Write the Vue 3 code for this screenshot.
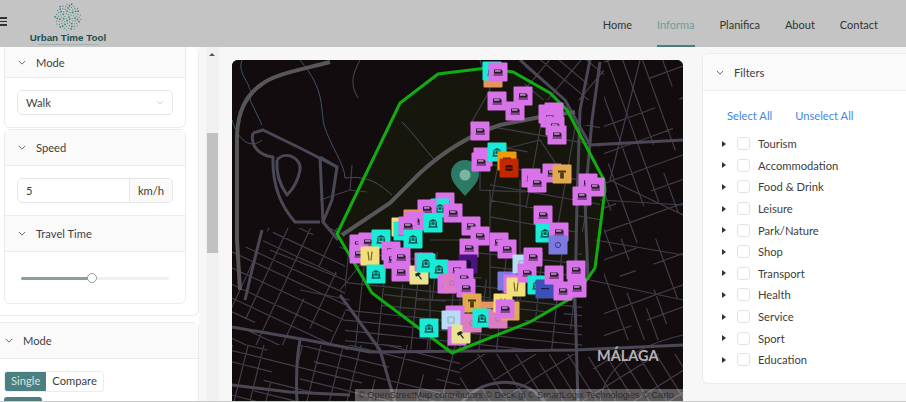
<script setup>
const navItems = ['Home', 'Informa', 'Planifica', 'About', 'Contact']
const filters = ['Tourism', 'Accommodation', 'Food & Drink', 'Leisure', 'Park/Nature', 'Shop', 'Transport', 'Health', 'Service', 'Sport', 'Education']

// logo dots, spread on a disc from a small fixed sequence
const logoDots = []
for (let i = 0; i < 80; i++) {
  const r = 13.5 * Math.sqrt((i + 0.5) / 80)
  const a = i * 2.39996
  logoDots.push({ x: 15 + r * Math.cos(a), y: 15 + r * Math.sin(a), r: i % 3 === 0 ? 0.85 : 0.55 })
}

// small streets of the base map: broken grids, one per city block area
let seed = 7
function rnd() {
  seed = (seed * 16807) % 2147483647
  return seed / 2147483647
}
function streetGrid(x0, y0, x1, y1, angle, step) {
  const cx = (x0 + x1) / 2
  const cy = (y0 + y1) / 2
  const reach = Math.hypot(x1 - x0, y1 - y0) / 2
  let d = ''
  for (const turn of [0, 90]) {
    const rad = ((angle + turn) * Math.PI) / 180
    const ux = Math.cos(rad)
    const uy = Math.sin(rad)
    const gap = turn ? step * 1.7 : step
    for (let t = -reach; t < reach; t += gap * (0.8 + rnd() * 0.5)) {
      let s = -reach
      while (s < reach) {
        const len = 14 + rnd() * 38
        if (rnd() > 0.25) {
          d += `M${(cx + ux * s - uy * t).toFixed(1)} ${(cy + uy * s + ux * t).toFixed(1)}L${(cx + ux * (s + len) - uy * t).toFixed(1)} ${(cy + uy * (s + len) + ux * t).toFixed(1)}`
        }
        s += len
      }
    }
  }
  return { x: x0, y: y0, w: x1 - x0, h: y1 - y0, d }
}
const streetAreas = [
  streetGrid(604, 60, 683, 340, 70, 15),
  streetGrid(232, 345, 460, 402, 14, 11),
  streetGrid(460, 354, 683, 402, 58, 13),
  streetGrid(232, 228, 345, 345, 25, 12),
  streetGrid(345, 252, 582, 350, 6, 10),
  streetGrid(490, 125, 600, 232, 10, 17),
  streetGrid(525, 60, 604, 100, 40, 14),
]

const highways = [
  'M330 62 C300 70 275 74 262 84 C245 96 238 112 237 135 L237 240 L240 290',
  'M342 235 L390 203 L420 173 C445 150 470 135 500 125 L540 117 L575 112',
]
const majorRoads = [
  'M232 327 L307 340 L370 352 L575 350 L683 345',
  'M578 402 L575 300 L577 200 L580 110 L590 60',
  'M253 133 L263 130 L300 148 L337 167 L332 200 L323 222 L338 240',
  'M253 133 C250 145 258 155 273 157 C272 185 280 205 295 222 L320 222',
  'M277 160 C285 150 302 158 300 170 C298 182 292 190 287 195 C280 185 276 172 277 160',
  'M320 157 L337 167 M320 157 L323 222',
  'M232 385 L290 392 L350 395',
  'M340 295 L380 350 L395 402',
  'M300 340 C296 360 296 380 297 402',
  'M462 402 C480 380 520 372 545 402',
  'M520 60 L565 100 L590 145 L683 140',
  'M262 230 L252 270 L245 300',
  'M600 62 L592 120 L585 200 L588 280',
]
const minorRoads = [
  'M360 60 C352 75 350 85 358 98', 'M640 60 L610 180 L683 215', 'M600 200 L683 205', 'M595 240 L683 255',
  'M590 280 L683 300', 'M520 180 L520 300', 'M480 160 L480 190 L525 192', 'M490 190 L490 300', 'M430 240 L500 240',
  'M430 285 L430 350', 'M460 290 L460 350', 'M415 300 L500 300', 'M300 290 L350 300', 'M270 250 L345 280',
  'M480 60 L490 90 L470 125', 'M500 150 L540 140 L560 170', 'M320 200 L350 190 L367 192', 'M350 190 L352 165',
  'M380 240 L340 290', 'M600 402 C605 365 640 345 683 335',
]
const streams = [
  'M242 60 C236 75 255 85 250 100 L262 125',
  'M300 60 C325 90 320 105 324 125 C330 145 345 165 345 178 C370 175 380 185 392 195',
  'M402 122 C415 135 425 150 435 160',
  'M232 120 C238 140 250 150 262 140',
]

const rawMarkers = [
  ['o', 493, 78], ['t', 492, 71], ['p', 498, 72], ['p', 497, 101], ['p', 523, 96], ['p', 515, 111], ['p', 480, 131],
  ['p', 554, 112], ['p', 548, 114], ['p', 550, 118], ['p', 555, 126], ['p', 557, 135],
  ['p', 483, 157], ['p', 481, 162], ['t', 497, 152], ['a', 507, 161], ['r', 509, 168],
  ['p', 531, 178], ['p', 537, 183], ['p', 552, 173], ['g', 562, 174], ['p', 588, 183], ['p', 595, 187], ['p', 582, 196],
  ['p', 543, 215], ['p', 445, 202], ['t', 440, 208], ['p', 427, 209], ['o', 413, 219], ['p', 415, 221], ['p', 453, 213],
  ['t', 433, 223], ['y', 401, 227], ['t', 403, 231], ['p', 408, 226], ['t', 413, 239], ['p', 471, 226], ['p', 480, 236], ['p', 469, 248], ['d', 468, 264],
  ['p', 499, 242], ['p', 507, 249], ['p', 359, 244], ['p', 368, 242], ['t', 381, 239], ['p', 359, 254], ['y', 370, 256], ['t', 376, 274],
  ['p', 391, 251], ['p', 393, 259], ['p', 401, 257], ['p', 401, 272], ['k', 419, 275], ['p', 424, 262], ['t', 426, 263], ['t', 439, 269], ['p', 457, 270],
  ['p', 447, 284], ['e', 452, 283], ['p', 464, 278], ['p', 466, 288], ['g', 472, 303],
  ['p', 455, 315], ['l', 451, 320], ['p', 457, 336], ['k', 461, 334], ['e', 472, 323], ['t', 429, 328], ['o', 490, 311], ['t', 482, 318], ['e', 498, 319],
  ['y', 503, 303], ['g', 510, 311], ['p', 505, 309], ['v', 507, 281], ['p', 513, 284], ['y', 516, 287], ['l', 522, 264], ['p', 533, 257], ['p', 527, 273],
  ['t', 537, 285], ['b', 545, 289], ['p', 554, 275], ['p', 563, 291], ['p', 576, 270], ['p', 577, 288],
  ['t', 545, 233], ['p', 559, 232], ['v', 558, 245],
]
const markerColors = {
  p: '#d973ea', t: '#1aebd6', y: '#f4de7c', k: '#e9e391', o: '#e8935f', g: '#e2a94f', a: '#f39a06',
  r: '#c42600', d: '#4c1280', v: '#7c7ade', b: '#3c50b8', l: '#b9dcf6', e: '#dc7cc4',
}
const markers = rawMarkers.map(([kind, x, y], id) => ({ id, kind, x, y, color: markerColors[kind] }))
const isochrone = '487,68 513,72 550,93 567,110 604,180 605,190 595,268 588,278 573,297 530,322 452,353 372,293 337,234 400,103 438,74'
</script>

<template>
  <div class="page">
    <header class="topbar">
      <div class="burger"><i></i><i></i><i></i></div>
      <div class="logo">
        <svg class="logo-mark" width="30" height="30" viewBox="0 0 30 30">
          <circle v-for="(d, i) in logoDots" :key="i" :cx="d.x" :cy="d.y" :r="d.r" fill="#2f7f78" />
        </svg>
        <div class="logo-name">Urban Time Tool</div>
        <div class="logo-tag"></div>
      </div>
      <nav class="nav">
        <a v-for="item in navItems" :key="item" :class="{ active: item === 'Informa' }">{{ item }}</a>
      </nav>
    </header>

    <div class="content">
      <aside class="sidebar">
        <div class="outer-card first">
          <div class="inner-card scrolled">
            <div class="card-head"><svg class="chev" viewBox="0 0 10 6"><path d="M1 1l4 4 4-4" /></svg>Mode</div>
            <div class="card-body">
              <div class="select">Walk<svg class="chev light" viewBox="0 0 10 6"><path d="M1 1l4 4 4-4" /></svg></div>
            </div>
          </div>
          <div class="inner-card">
            <div class="card-head"><svg class="chev" viewBox="0 0 10 6"><path d="M1 1l4 4 4-4" /></svg>Speed</div>
            <div class="card-body">
              <div class="input-group"><span class="input-value">5</span><span class="input-unit">km/h</span></div>
            </div>
            <div class="card-head bordered"><svg class="chev" viewBox="0 0 10 6"><path d="M1 1l4 4 4-4" /></svg>Travel Time</div>
            <div class="slider-body">
              <div class="slider"><div class="slider-fill"></div><div class="slider-thumb"></div></div>
            </div>
          </div>
        </div>
        <div class="outer-card second">
          <div class="card-head"><svg class="chev" viewBox="0 0 10 6"><path d="M1 1l4 4 4-4" /></svg>Mode</div>
          <div class="mode-body">
            <div class="toggle"><span class="on">Single</span><span>Compare</span></div>
            <div class="next-btn"></div>
          </div>
        </div>
      </aside>

      <div class="scrollbar">
        <span class="scroll-up"></span>
        <div class="scroll-thumb"></div>
      </div>

      <main class="map">
        <svg class="map-svg" width="451" height="342" viewBox="232 60 451 342">
          <defs>
            <clipPath v-for="(a, i) in streetAreas" :id="'area' + i" :key="i">
              <rect :x="a.x" :y="a.y" :width="a.w" :height="a.h" />
            </clipPath>
          </defs>
          <rect x="232" y="60" width="451" height="342" fill="#130c0e" />
          <polygon :points="isochrone" fill="#2b3a08" fill-opacity=".22" />
          <path v-for="(d, i) in streams" :key="'s' + i" :d="d" class="stream" />
          <path v-for="(a, i) in streetAreas" :key="'a' + i" :d="a.d" :clip-path="`url(#area${i})`" class="minor" />
          <path v-for="(d, i) in minorRoads" :key="'m' + i" :d="d" class="minor" />
          <path v-for="(d, i) in majorRoads" :key="'r' + i" :d="d" class="major" />
          <path v-for="(d, i) in highways" :key="'h' + i" :d="d" class="highway" />
          <polygon :points="isochrone" fill="none" stroke="#12ab12" stroke-width="3" />
          <path d="M465 196c-9-10-14-15-14-22a14 14 0 0 1 28 0c0 7-5 12-14 22z" fill="#2c7a66" />
          <circle cx="465" cy="175" r="5.5" fill="#7ab5a3" />
          <g v-for="m in markers" :key="m.id" :transform="`translate(${m.x - 9.5} ${m.y - 9.5})`">
            <rect width="19" height="19" rx="1" :fill="m.color" />
            <g v-if="m.kind === 'p'" fill="#2a1a2c">
              <path d="M5.5 7h7.5l1 1.8v2.4H5.5z" />
              <rect x="6.5" y="7.8" width="5.5" height="1.3" fill="#e6a8f2" />
              <rect x="5" y="12" width="9.5" height="1" />
            </g>
            <g v-else-if="m.kind === 't'" fill="#0b4a48">
              <path d="M5 8L9.5 5.5 14 8z" /><rect x="5.5" y="8.8" width="1.6" height="3.8" /><rect x="11.9" y="8.8" width="1.6" height="3.8" />
              <rect x="5" y="12.7" width="9" height="1.4" /><rect x="8" y="8.8" width="3" height="2.5" />
            </g>
            <path v-else-if="m.kind === 'y'" d="M7.5 5l1 9M11.5 5l-1 9" stroke="#6d6630" stroke-width="1.2" fill="none" />
            <path v-else-if="m.kind === 'k'" d="M5.5 8.5l4-2 2 2-2 1 3 4-1 .8-3-4-2 1z" fill="#222" />
            <g v-else-if="m.kind === 'g' || m.kind === 'a'" fill="#4a3712">
              <rect x="5.5" y="6" width="8" height="2" /><rect x="7.7" y="8" width="3.6" height="6" />
            </g>
            <g v-else-if="m.kind === 'r'" fill="#330800"><rect x="5.5" y="6.5" width="8" height="6" rx="3" /><rect x="5.5" y="9" width="8" height="1" fill="#c42600" /></g>
            <g v-else-if="m.kind === 'd'" fill="#140424"><path d="M5.5 8L9.5 5.5 13.5 8z" /><rect x="6.5" y="8.5" width="6" height="5" /></g>
            <circle v-else-if="m.kind === 'v'" cx="9.5" cy="9.5" r="2.6" fill="none" stroke="#3a3a80" stroke-width="1" />
            <rect v-else-if="m.kind === 'b'" x="5.5" y="8.5" width="8" height="1.2" fill="#141c50" />
            <path v-else-if="m.kind === 'l'" d="M6.5 6.5h6v6h-6z" fill="none" stroke="#8daabd" stroke-width="1" />
            <circle v-else-if="m.kind === 'e'" cx="9.5" cy="9.5" r="2.4" fill="none" stroke="#c06aa6" stroke-width="1" />
            <rect v-else x="6.5" y="6.5" width="6" height="5" fill="#6a3a1c" />
          </g>
        </svg>
        <span class="city">MÁLAGA</span>
        <div class="attribution">© OpenStreetMap contributors © Deck.gl © SmartLogix Technologies © Carto</div>
      </main>

      <section class="filters">
        <div class="card-head filters-head"><svg class="chev" viewBox="0 0 10 6"><path d="M1 1l4 4 4-4" /></svg>Filters</div>
        <div class="filters-body">
          <div class="links"><a>Select All</a><a>Unselect All</a></div>
          <ul class="tree">
            <li v-for="f in filters" :key="f">
              <span class="caret"></span>
              <span class="check"></span>
              <span>{{ f }}</span>
            </li>
          </ul>
        </div>
      </section>
    </div>
  </div>
</template>

<style>
html, body {
  margin: 0;
  overflow: hidden;
}
</style>

<style scoped>
.page {
  width: 906px;
  height: 402px;
  overflow: hidden;
  display: flex;
  flex-direction: column;
  background: #fff;
  color: #3d3d3d;
  font-family: Lato, "Open Sans", sans-serif;
  font-size: 11.2px;
  border-bottom: 1px solid #c9c9c9;
  box-sizing: border-box;
}

.topbar {
  flex: 0 0 47px;
  height: 47px;
  background: #c4c4c4;
  display: flex;
  align-items: center;
}

.burger {
  width: 7px;
  margin-top: -4px;
  display: flex;
  flex-direction: column;
  gap: 2px;
}
.burger i {
  height: 1.5px;
  background: #333;
}

.logo {
  width: 78px;
  margin-left: 22px;
  display: flex;
  flex-direction: column;
  align-items: center;
}
.logo-name {
  font-family: "Liberation Sans", sans-serif;
  font-size: 9.8px;
  font-weight: 700;
  color: #1f4d4c;
  line-height: 11px;
  white-space: nowrap;
}
.logo-tag {
  width: 60px;
  height: 1px;
  margin-top: 1px;
  background: #a5b1b1;
}

.nav {
  margin-left: auto;
  display: flex;
  gap: 25px;
  padding-right: 28px;
  height: 100%;
  font-size: 11px;
}
.nav a {
  display: flex;
  align-items: center;
  box-sizing: border-box;
  height: 100%;
  padding-top: 1px;
  color: #333;
}
.nav a.active {
  color: #6f9c9c;
  border-bottom: 2px solid #4b7d80;
  padding-top: 3px;
}

.content {
  flex: 1;
  display: flex;
  min-height: 0;
  background: #f7f7f7;
}

.sidebar {
  flex: 0 0 199px;
  background: #fff;
  overflow: hidden;
}

.outer-card {
  box-sizing: border-box;
  width: 200px;
  margin-left: -1px;
  background: #fff;
  border: 1px solid #ececec;
  border-radius: 0 6px 6px 0;
}
.outer-card.first {
  height: 269px;
  border-top: 0;
  padding-left: 4px;
}
.outer-card.second {
  margin-top: 6px;
  height: 90px;
  border-radius: 0 6px 0 0;
}

.inner-card {
  box-sizing: border-box;
  width: 182px;
  border: 1px solid #ececec;
  border-radius: 6px;
  background: #fff;
}
.inner-card.scrolled {
  height: 81px;
  border-top: 0;
  border-radius: 0 0 6px 6px;
  margin-bottom: 1px;
}

.card-head {
  height: 30px;
  display: flex;
  align-items: center;
  gap: 10px;
  padding-left: 13px;
  background: #fafafa;
  border-bottom: 1px solid #ececec;
  color: #3f3f3f;
}
.inner-card .card-head {
  height: 35px;
}
.inner-card.scrolled .card-head {
  height: 30px;
}
.card-head.bordered {
  border-top: 1px solid #ececec;
}
.outer-card.second .card-head {
  height: 35px;
  padding-left: 5px;
}

.chev {
  width: 8px;
  height: 5px;
  fill: none;
  stroke: #444;
  stroke-width: 1;
}
.chev.light {
  stroke: #c0c0c0;
  margin-left: auto;
}

.card-body {
  padding: 12px 12px 0;
}
.inner-card:not(.scrolled) .card-body {
  height: 49px;
  box-sizing: border-box;
}

.select {
  box-sizing: border-box;
  height: 25px;
  display: flex;
  align-items: center;
  padding: 0 8px;
  border: 1px solid #e6e6e6;
  border-radius: 5px;
}

.input-group {
  box-sizing: border-box;
  height: 25px;
  display: flex;
  border: 1px solid #e6e6e6;
  border-radius: 5px;
  overflow: hidden;
}
.input-value {
  flex: 1;
  display: flex;
  align-items: center;
  padding-left: 8px;
}
.input-unit {
  width: 42px;
  display: flex;
  align-items: center;
  justify-content: center;
  background: #fafafa;
  border-left: 1px solid #e6e6e6;
}

.slider-body {
  height: 51px;
  padding: 25px 16px 0;
  box-sizing: border-box;
}
.slider {
  position: relative;
  height: 3px;
  background: #f0f0f0;
  border-radius: 2px;
}
.slider-fill {
  width: 48%;
  height: 100%;
  background: #8b9e9e;
  border-radius: 2px;
}
.slider-thumb {
  position: absolute;
  left: 48%;
  top: -4px;
  width: 8px;
  height: 8px;
  margin-left: -5px;
  background: #fff;
  border: 1.5px solid #8b9e9e;
  border-radius: 50%;
}

.mode-body {
  padding: 12px 4px;
}
.toggle {
  display: inline-flex;
  height: 19px;
  border: 1px solid #ececec;
  border-radius: 3px;
  overflow: hidden;
  line-height: 18px;
}
.toggle span {
  padding: 0 6px;
}
.toggle .on {
  background: #4c7f80;
  color: #d6e4e4;
}
.next-btn {
  width: 38px;
  height: 10px;
  margin-top: 5px;
  background: #4c7f80;
  border-radius: 3px 3px 0 0;
}

.scrollbar {
  position: relative;
  flex: 0 0 13px;
  margin-left: 7px;
  background: #f1f1f1;
}
.scroll-up {
  position: absolute;
  top: 6px;
  left: 3px;
  border-left: 3px solid transparent;
  border-right: 3px solid transparent;
  border-bottom: 3px solid #555;
}
.scroll-thumb {
  position: absolute;
  top: 86px;
  left: 1px;
  right: 1px;
  height: 120px;
  background: #c1c1c1;
}

.map {
  position: relative;
  flex: 0 0 451px;
  margin: 13px 0 0 13px;
  border-radius: 6px 6px 0 0;
  overflow: hidden;
  background: #130c0e;
}
.map-svg {
  display: block;
}
.highway {
  fill: none;
  stroke: #575658;
  stroke-width: 4;
}
.major {
  fill: none;
  stroke: #4a4856;
  stroke-width: 3;
  stroke-linejoin: round;
}
.minor {
  fill: none;
  stroke: #403d4a;
  stroke-width: 1.2;
}
.stream {
  fill: none;
  stroke: #3c5566;
  stroke-width: 1;
}
.city {
  position: absolute;
  left: 365px;
  top: 287px;
  font-family: Lato, "Liberation Sans", sans-serif;
  font-size: 14.5px;
  font-weight: 700;
  color: #b5b3b5;
}
.attribution {
  position: absolute;
  right: 0;
  bottom: 0;
  width: 328px;
  height: 12px;
  line-height: 12px;
  padding-left: 3px;
  box-sizing: border-box;
  white-space: nowrap;
  overflow: hidden;
  font-family: "Liberation Sans", sans-serif;
  font-size: 9.2px;
  color: #2d2d2d;
  background: rgba(255, 255, 255, 0.32);
}

.filters {
  flex: 0 0 210px;
  box-sizing: border-box;
  height: 331px;
  margin: 6px 0 0 19px;
  background: #fff;
  border: 1px solid #ececec;
  border-right: 0;
  border-radius: 6px 0 0 6px;
}
.filters-head {
  height: 36px;
  border-radius: 6px 0 0 0;
  padding-left: 13px;
  gap: 10px;
}
.filters-body {
  padding: 16px 0 0 24px;
}
.links {
  display: flex;
  gap: 23px;
  height: 18px;
  line-height: 18px;
  color: #3f86e6;
  margin-bottom: 8px;
}
.tree {
  list-style: none;
  margin: 0;
  padding: 0;
}
.tree li {
  height: 21.6px;
  display: flex;
  align-items: center;
}
.caret {
  width: 0;
  height: 0;
  margin-left: -5px;
  border-top: 3px solid transparent;
  border-bottom: 3px solid transparent;
  border-left: 4px solid #333;
}
.check {
  box-sizing: border-box;
  width: 13px;
  height: 13px;
  margin: 0 8px 0 11px;
  border: 1px solid #e3e3e3;
  border-radius: 3px;
  background: #fff;
}
</style>
